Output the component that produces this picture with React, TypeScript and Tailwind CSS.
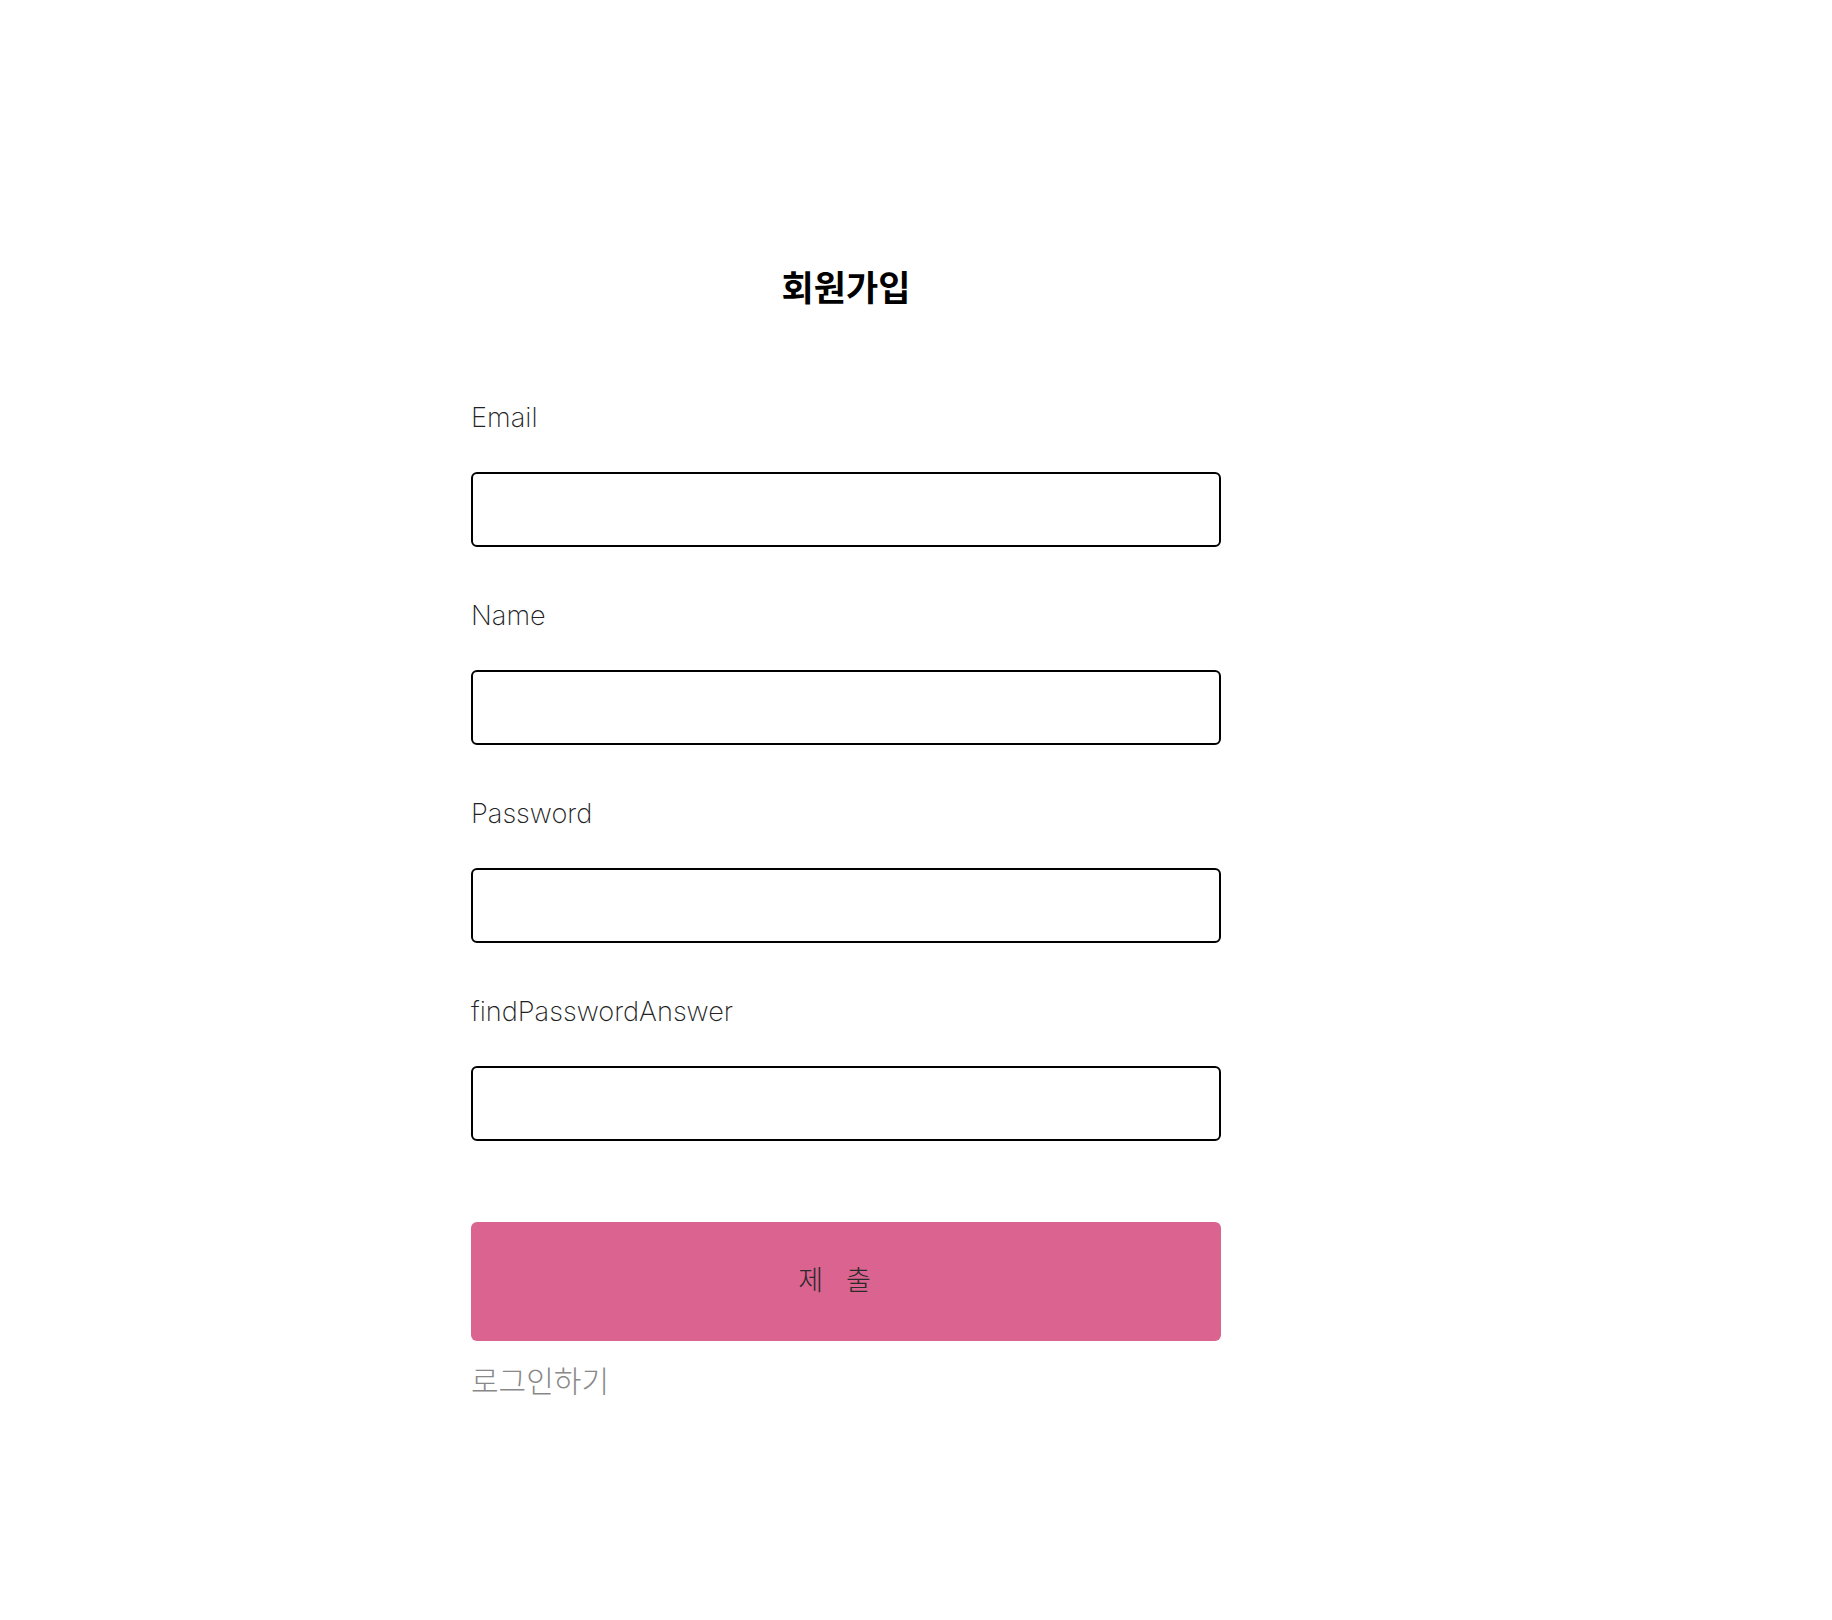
import React from "react";

const fields = ["Email", "Name", "Password", "findPasswordAnswer"];

export default function App() {
  return (
    <div
      className="min-h-[1620px] w-full bg-white pt-[266px]"
      style={{ fontFamily: 'Inter, "Noto Sans CJK KR", sans-serif' }}
    >
      <div className="ml-[471px] flex w-[750px] flex-col">
        <h1
          className="text-center text-[35px] font-bold leading-[40px] text-black"
          style={{ fontFamily: '"Noto Sans CJK KR", sans-serif' }}
        >
          회원가입
        </h1>
        <form className="mt-[96px] flex flex-col" onSubmit={(e) => e.preventDefault()}>
          {fields.map((f, i) => (
            <div key={f} className={i === 0 ? "flex flex-col" : "mt-[53px] flex flex-col"}>
              <label className="text-[27.2px] font-extralight leading-[32px] text-[#222222]">{f}</label>
              <input
                type={f === "Password" ? "password" : "text"}
                className="mt-[38px] h-[75px] w-full rounded-[6px] border-2 border-black bg-white px-4 text-[24px] outline-none"
              />
            </div>
          ))}
          <button
            type="submit"
            className="mt-[81px] flex h-[119px] w-full items-center justify-center rounded-[6px] bg-[#db638f] pb-[4px] text-[27px] font-light tracking-[23px] text-[#2a2a2a]"
            style={{ fontFamily: '"Noto Sans CJK KR", sans-serif' }}
          >
            제출
          </button>
        </form>
        <div
          className="mt-[20px] text-[30px] font-light leading-[36px] text-[#888888]"
          style={{ fontFamily: '"Noto Sans CJK KR", sans-serif' }}
        >
          로그인하기
        </div>
      </div>
    </div>
  );
}
